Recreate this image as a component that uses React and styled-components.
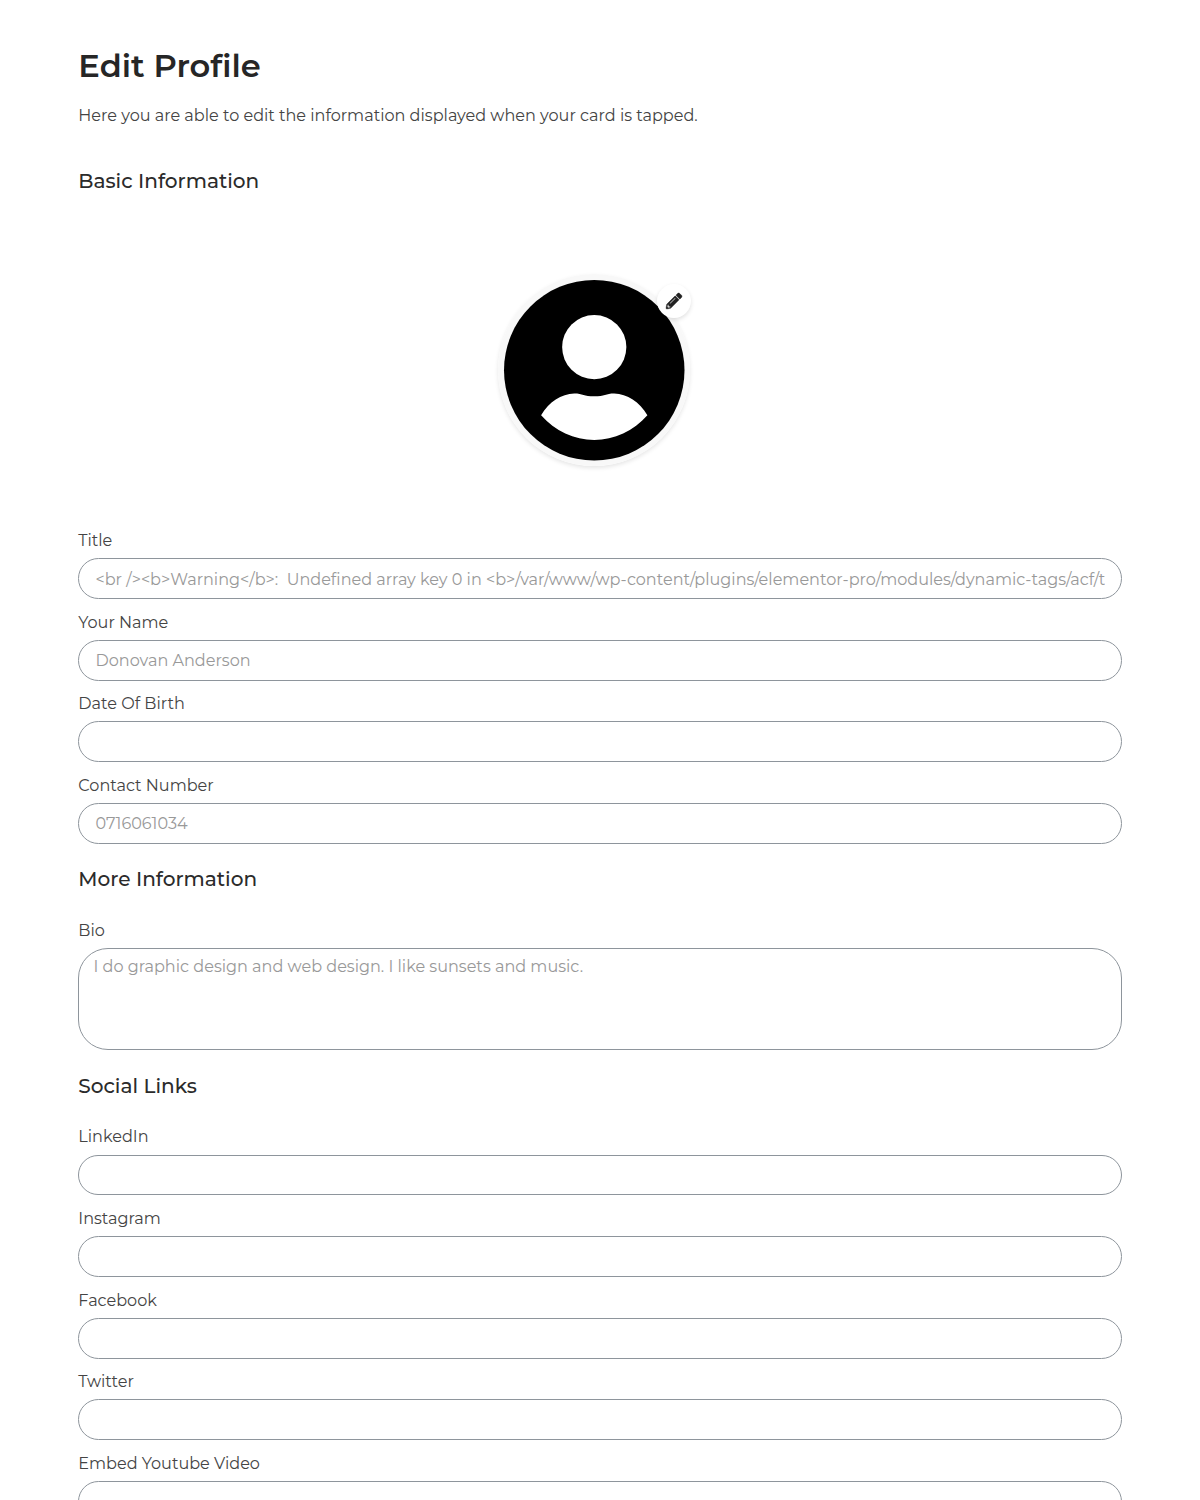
import React from "react";
import styled, { createGlobalStyle } from "styled-components";
import { FaPencilAlt } from "react-icons/fa";

const GlobalStyle = createGlobalStyle`
  *, *::before, *::after { box-sizing: border-box; }
  html { overflow: hidden; }
  body {
    margin: 0;
    height: 1500px;
    overflow: hidden;
    background: #fff;
    color: #444;
    font-family: Montserrat, Inter, "Liberation Sans", sans-serif;
    font-size: 16.07px;
  }
`;

const Page = styled.main`
  display: flex;
  flex-direction: column;
  padding: 46px 78.3px 0;
`;

const Title = styled.h1`
  margin: 0;
  color: #262626;
  font-size: 32.15px;
  font-weight: 600;
  line-height: 40px;
`;

const Intro = styled.p`
  margin: 17px 0 0;
  line-height: 24px;
  white-space: nowrap;
`;

const SectionTitle = styled.h2`
  margin: ${(p) => p.$top ?? 12.8}px 0 26.9px;
  color: #2b2b2b;
  font-size: 20.09px;
  font-weight: 500;
  line-height: 24px;
`;

const AvatarArea = styled.div`
  display: flex;
  justify-content: center;
  padding: 54px 12px 61.8px 0;
`;

const Avatar = styled.div`
  position: relative;
  width: 192.5px;
  height: 192.5px;
  border: 6px solid #f8f8f8;
  border-radius: 50%;
  box-shadow: 0 2px 4px rgba(0, 0, 0, 0.1);
`;

const Portrait = styled.svg`
  display: block;
  overflow: visible;
  width: 180.5px;
  height: 180.5px;
`;

const EditButton = styled.button`
  position: absolute;
  top: 4px;
  right: -7px;
  display: flex;
  align-items: center;
  justify-content: center;
  width: 34px;
  height: 34px;
  padding: 0;
  border: 0;
  border-radius: 50%;
  background: #fff;
  color: #222;
  box-shadow: 0 2px 4px rgba(0, 0, 0, 0.12);
`;

const PencilIcon = styled(FaPencilAlt)`
  width: 16px;
  height: 16px;
  overflow: visible;
  stroke: currentColor;
  stroke-width: 12px;
`;

const Field = styled.div`
  display: flex;
  flex-direction: column;
  gap: 6.1px;
  padding-bottom: 10.7px;
`;

const Label = styled.label`
  line-height: 24px;
`;

const Input = styled.input`
  width: 100%;
  height: 40.8px;
  padding: 0 16.2px;
  border: 1px solid #8e959c;
  border-radius: 20.4px;
  background: #fff;
  font: inherit;
  &::placeholder { color: #999; opacity: 1; }
`;

const TextArea = styled.textarea`
  display: block;
  width: 100%;
  height: 101.8px;
  padding: 4.6px 14.2px;
  border: 1px solid #8e959c;
  border-radius: 30px;
  background: #fff;
  font: inherit;
  line-height: 24px;
  resize: none;
  &::placeholder { color: #999; opacity: 1; }
`;

const basic = [
  {
    id: "title",
    label: "Title",
    hint: "<br /><b>Warning</b>:  Undefined array key 0 in <b>/var/www/wp-content/plugins/elementor-pro/modules/dynamic-tags/acf/t",
  },
  { id: "name", label: "Your Name", hint: "Donovan Anderson" },
  { id: "dob", label: "Date Of Birth" },
  { id: "phone", label: "Contact Number", hint: "0716061034" },
];

const social = [
  { id: "linkedin", label: "LinkedIn" },
  { id: "instagram", label: "Instagram" },
  { id: "facebook", label: "Facebook" },
  { id: "twitter", label: "Twitter" },
  { id: "youtube", label: "Embed Youtube Video" },
];

function TextField({ id, label, hint }) {
  return (
    <Field>
      <Label htmlFor={id}>{label}</Label>
      <Input id={id} placeholder={hint} />
    </Field>
  );
}

export default function App() {
  return (
    <>
      <GlobalStyle />
      <Page>
        <Title>Edit Profile</Title>
        <Intro>
          Here you are able to edit the information displayed when your card is tapped.
        </Intro>
        <SectionTitle $top={42}>Basic Information</SectionTitle>
        <AvatarArea>
          <Avatar>
            <Portrait viewBox="0 0 181 181" aria-hidden="true">
              <circle cx="90.5" cy="90.5" r="90.5" fill="#000" />
              <circle cx="90.5" cy="67.3" r="32.2" fill="#fff" />
              <path
                fill="#fff"
                d="M37.2 135.7C45 122 57.5 114 70.5 113.7C79 113.7 80 116.6 90.5 116.6C101 116.6 102 113.7 110.5 113.7C123.5 114 136 122 143.8 135.7C130 151.5 110.5 160.5 90.5 160.5C70.5 160.5 51 151.5 37.2 135.7Z"
              />
            </Portrait>
            <EditButton aria-label="Edit picture">
              <PencilIcon />
            </EditButton>
          </Avatar>
        </AvatarArea>
        {basic.map((f) => <TextField key={f.id} {...f} />)}
        <SectionTitle>More Information</SectionTitle>
        <Field>
          <Label htmlFor="bio">Bio</Label>
          <TextArea
            id="bio"
            placeholder="I do graphic design and web design. I like sunsets and music."
          />
        </Field>
        <SectionTitle>Social Links</SectionTitle>
        {social.map((f) => <TextField key={f.id} {...f} />)}
      </Page>
    </>
  );
}
